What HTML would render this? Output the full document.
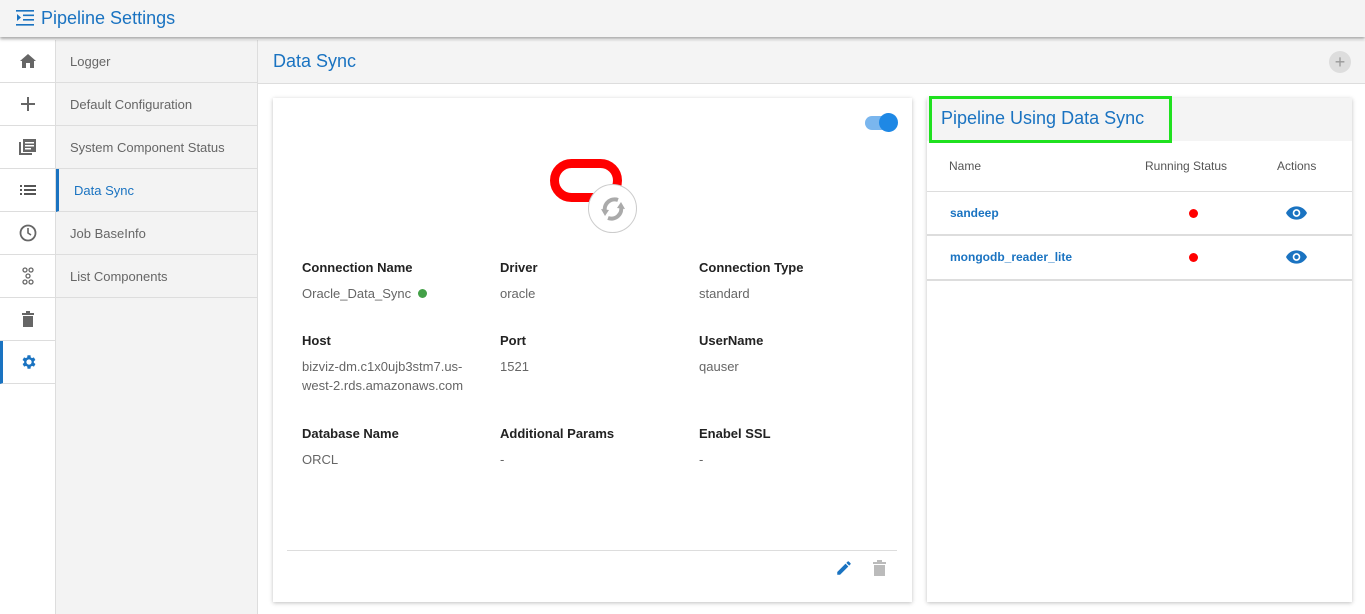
<!DOCTYPE html>
<html><head><meta charset="utf-8"><style>
*{box-sizing:border-box;margin:0;padding:0}
body{width:1365px;height:614px;overflow:hidden;font-family:"Liberation Sans",sans-serif;background:#fff;position:relative;color:#333}
.top{position:absolute;left:0;top:0;width:1365px;height:37px;background:#f4f4f4;box-shadow:0 2px 3px rgba(0,0,0,.35);z-index:5}
.top span{position:absolute;left:41px;top:8px;font-size:18px;color:#1a73c1}
.ic{position:absolute;left:0;top:40px;width:56px;height:574px;background:#fff;border-right:1px solid #ddd}
.ic div{height:43px;border-bottom:1px solid #ddd;display:flex;align-items:center;justify-content:center}
.menu{position:absolute;left:56px;top:40px;width:202px;height:574px;background:#f3f3f3;border-right:1px solid #ddd}
.menu div{height:43px;border-bottom:1px solid #ddd;padding-left:14px;line-height:43px;font-size:13px;color:#666}
.hdr{position:absolute;left:258px;top:40px;width:1107px;height:44px;background:#f4f4f4;border-bottom:1px solid #ddd}
.hdr span{position:absolute;left:15px;top:11px;font-size:18px;color:#1a73c1}
.card{position:absolute;background:#fff;box-shadow:0 1px 4px rgba(0,0,0,.25)}
.lab{position:absolute;font-size:13px;font-weight:bold;color:#222}
.val{position:absolute;font-size:13px;color:#666;line-height:19px}
</style></head><body>
<div class="top"><svg style="position:absolute;left:16px;top:10px" width="18" height="16" viewBox="0 0 18 16"><path d="M0 0h18v1.6H0zM7 4.5h11v1.6H7zM7 9h11v1.6H7zM0 14h18v1.6H0zM1 4l4 3.5L1 11z" fill="#1a73c1"/></svg><span>Pipeline Settings</span></div>
<div class="ic">
<div><svg width="16" height="14" viewBox="0 0 16 14"><path d="M8 0L0 7h2v7h4V9h4v5h4V7h2z" fill="#666"/></svg></div>
<div><svg width="14" height="14"><path d="M6 0h2v14H6zM0 6h14v2H0z" fill="#666"/></svg></div>
<div><svg width="17" height="16"><path d="M0 3h2v11h11v2H0z M4 0h13v13H4z" fill="#666"/><path d="M6 3h9v1.5H6zM6 6h9v1.5H6zM6 9h6v1.5H6z" fill="#fff"/></svg></div>
<div><svg width="16" height="10"><path d="M0 0h2v2H0zM4 0h12v2H4zM0 4h2v2H0zM4 4h12v2H4zM0 8h2v2H0zM4 8h12v2H4z" fill="#555"/></svg></div>
<div><svg width="18" height="18"><circle cx="9" cy="9" r="7.5" fill="none" stroke="#666" stroke-width="1.8"/><path d="M9 4v5l3 2" fill="none" stroke="#666" stroke-width="1.6"/></svg></div>
<div><svg width="12" height="18"><g fill="none" stroke="#666" stroke-width="1.3"><circle cx="3" cy="3" r="2"/><circle cx="9" cy="3" r="2"/><circle cx="6" cy="9" r="2"/><circle cx="3" cy="15" r="2"/><circle cx="9" cy="15" r="2"/></g></svg></div>
<div><svg width="12" height="16"><path d="M0 2h12v2H0zM4 0h4v2H4zM1 5h10v11H1z" fill="#666"/></svg></div>
<div style="border-left:3px solid #1a73c1"><svg width="18" height="18" viewBox="0 0 24 24"><path fill="#1a73c1" d="M19.4 13a7.5 7.5 0 000-2l2.1-1.6-2-3.5-2.5 1a7 7 0 00-1.7-1L15 3h-4l-.4 2.9a7 7 0 00-1.7 1l-2.5-1-2 3.5L6.6 11a7.5 7.5 0 000 2l-2.1 1.6 2 3.5 2.5-1a7 7 0 001.7 1L11 21h4l.4-2.9a7 7 0 001.7-1l2.5 1 2-3.5zM13 15.5a3.5 3.5 0 110-7 3.5 3.5 0 010 7z" transform="translate(-1 0)"/></svg></div>
</div>
<div class="menu">
<div>Logger</div><div>Default Configuration</div><div>System Component Status</div>
<div style="border-left:3px solid #1a73c1;padding-left:15px;color:#1a73c1">Data Sync</div>
<div>Job BaseInfo</div><div>List Components</div>
</div>
<div class="hdr"><span>Data Sync</span><div style="position:absolute;left:1071px;top:11px;width:22px;height:22px;border-radius:50%;background:#ddd;color:#999;text-align:center;line-height:22px;font-size:18px">+</div></div>

<div class="card" style="left:273px;top:98px;width:639px;height:504px">
<div style="position:absolute;left:592px;top:18px;width:30px;height:14px;border-radius:7px;background:#7ab6ee"></div>
<div style="position:absolute;left:606px;top:15px;width:19px;height:19px;border-radius:50%;background:#1e88e5"></div>
<div style="position:absolute;left:277px;top:61px;width:72px;height:43px;border:9px solid #f00;border-radius:22px"></div>
<div style="position:absolute;left:315px;top:86px;width:49px;height:49px;border-radius:50%;background:#fff;border:1px solid #ccc"></div>
<svg style="position:absolute;left:325px;top:96px" width="30" height="30" viewBox="0 0 30 30"><path d="M20 6a10 10 0 00-13 12" fill="none" stroke="#aaa" stroke-width="4"/><path d="M10 24a10 10 0 0013-12" fill="none" stroke="#aaa" stroke-width="4"/><path d="M3 15l4 7 4-6z M27 15l-4-7-4 6z" fill="#aaa"/></svg>
<div class="lab" style="left:29px;top:162px">Connection Name</div><div class="val" style="left:29px;top:186px">Oracle_Data_Sync <span style="display:inline-block;width:9px;height:9px;border-radius:50%;background:#43a047;margin-left:3px"></span></div>
<div class="lab" style="left:227px;top:162px">Driver</div><div class="val" style="left:227px;top:186px">oracle</div>
<div class="lab" style="left:426px;top:162px">Connection Type</div><div class="val" style="left:426px;top:186px">standard</div>
<div class="lab" style="left:29px;top:235px">Host</div><div class="val" style="left:29px;top:259px">bizviz-dm.c1x0ujb3stm7.us-<br>west-2.rds.amazonaws.com</div>
<div class="lab" style="left:227px;top:235px">Port</div><div class="val" style="left:227px;top:259px">1521</div>
<div class="lab" style="left:426px;top:235px">UserName</div><div class="val" style="left:426px;top:259px">qauser</div>
<div class="lab" style="left:29px;top:328px">Database Name</div><div class="val" style="left:29px;top:352px">ORCL</div>
<div class="lab" style="left:227px;top:328px">Additional Params</div><div class="val" style="left:227px;top:352px">-</div>
<div class="lab" style="left:426px;top:328px">Enabel SSL</div><div class="val" style="left:426px;top:352px">-</div>
<div style="position:absolute;left:14px;top:452px;width:610px;height:1px;background:#ddd"></div>
<svg style="position:absolute;left:562px;top:461px" width="18" height="18" viewBox="0 0 24 24"><path fill="#1a73c1" d="M3 17.25V21h3.75L17.8 9.94l-3.75-3.75zM20.7 7.04a1 1 0 000-1.41l-2.34-2.34a1 1 0 00-1.41 0l-1.83 1.83 3.75 3.75z"/></svg>
<svg style="position:absolute;left:600px;top:462px" width="13" height="16"><path d="M0 2h13v2H0zM4 0h5v2H4zM1 5h11v11H1z" fill="#bbb"/></svg>
</div>

<div class="card" style="left:927px;top:98px;width:425px;height:504px">
<div style="position:absolute;left:0;top:0;width:425px;height:43px;background:#f4f4f4"></div>
<div style="position:absolute;left:2px;top:-2px;width:243px;height:47px;border:3px solid #1fe11f"></div>
<div style="position:absolute;left:14px;top:10px;font-size:18px;color:#1a73c1">Pipeline Using Data Sync</div>
<div style="position:absolute;left:22px;top:61px;font-size:12px;color:#555">Name</div>
<div style="position:absolute;left:218px;top:61px;font-size:12px;color:#555">Running Status</div>
<div style="position:absolute;left:350px;top:61px;font-size:12px;color:#555">Actions</div>
<div style="position:absolute;left:0;top:93px;width:425px;height:1px;background:#ddd"></div>
<div style="position:absolute;left:23px;top:108px;font-size:12px;font-weight:bold;color:#1a73c1">sandeep</div>
<div style="position:absolute;left:262px;top:111px;width:9px;height:9px;border-radius:50%;background:#f00"></div>
<svg style="position:absolute;left:359px;top:108px" width="21" height="14" viewBox="0 0 22 14"><path d="M11 0C6 0 2 3 0 7c2 4 6 7 11 7s9-3 11-7c-2-4-6-7-11-7z" fill="#1a73c1"/><circle cx="11" cy="7" r="4" fill="#fff"/><circle cx="11" cy="7" r="2.3" fill="#1a73c1"/></svg>
<div style="position:absolute;left:0;top:136px;width:425px;height:2px;background:#ddd"></div>
<div style="position:absolute;left:23px;top:152px;font-size:12px;font-weight:bold;color:#1a73c1">mongodb_reader_lite</div>
<div style="position:absolute;left:262px;top:155px;width:9px;height:9px;border-radius:50%;background:#f00"></div>
<svg style="position:absolute;left:359px;top:152px" width="21" height="14" viewBox="0 0 22 14"><path d="M11 0C6 0 2 3 0 7c2 4 6 7 11 7s9-3 11-7c-2-4-6-7-11-7z" fill="#1a73c1"/><circle cx="11" cy="7" r="4" fill="#fff"/><circle cx="11" cy="7" r="2.3" fill="#1a73c1"/></svg>
<div style="position:absolute;left:0;top:181px;width:425px;height:2px;background:#ddd"></div>
</div>
</body></html>
